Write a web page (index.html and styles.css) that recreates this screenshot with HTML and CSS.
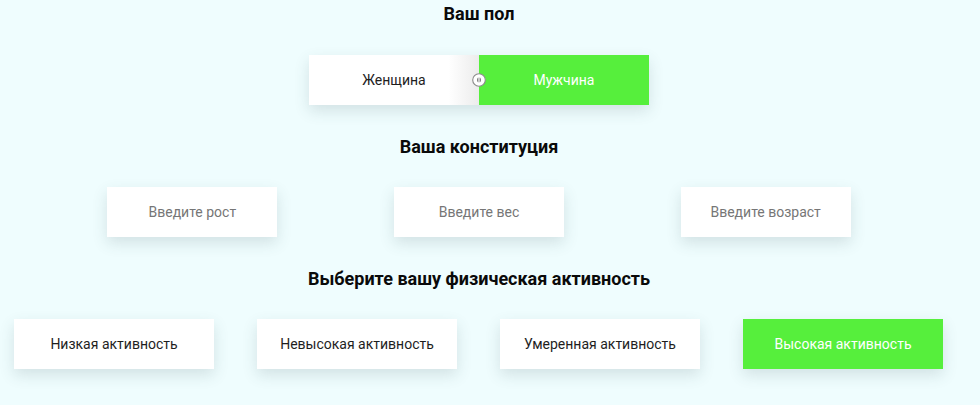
FILE: index.html
```html
<!DOCTYPE html>
<html lang="ru">
<head>
<meta charset="utf-8">
<title>Калькулятор</title>
<link rel="stylesheet" href="styles.css">
</head>
<body>
<main class="form">
  <section class="block block-gender">
    <h2 class="title">Ваш пол</h2>
    <div class="toggle">
      <button class="toggle-option toggle-female" type="button">Женщина</button>
      <button class="toggle-option toggle-male is-active" type="button">Мужчина</button>
      <span class="toggle-handle" aria-hidden="true">
        <svg viewBox="0 0 14 14" width="14" height="14">
          <circle cx="7" cy="7" r="6.3" fill="#fff" stroke="#8a8a8a" stroke-width="1.1"/>
          <path d="M6.3 4.6 C4.9 5.2 4.9 8.8 6.3 9.4 Z" fill="#555"/>
          <path d="M7.7 4.6 C9.1 5.2 9.1 8.8 7.7 9.4 Z" fill="#555"/>
        </svg>
      </span>
    </div>
  </section>

  <section class="block">
    <h2 class="title">Ваша конституция</h2>
    <div class="fields">
      <div class="field-cell"><input class="field" type="text" placeholder="Введите рост"></div>
      <div class="field-cell"><input class="field" type="text" placeholder="Введите вес"></div>
      <div class="field-cell"><input class="field" type="text" placeholder="Введите возраст"></div>
    </div>
  </section>

  <section class="block">
    <h2 class="title">Выберите вашу физическая активность</h2>
    <div class="activities">
      <button class="activity" type="button">Низкая активность</button>
      <button class="activity" type="button">Невысокая активность</button>
      <button class="activity" type="button">Умеренная активность</button>
      <button class="activity is-active" type="button">Высокая активность</button>
    </div>
  </section>
</main>
</body>
</html>
```

FILE: styles.css
```css
* {
  box-sizing: border-box;
}

html, body {
  margin: 0;
  padding: 0;
  background: #effdfe;
}

body {
  font-family: Roboto, "Liberation Sans", Arial, sans-serif;
  color: #1e1e1e;
  width: 980px;
  height: 405px;
  overflow: hidden;
}

.form {
  width: 958px;
  padding-top: 3px;
  display: flex;
  flex-direction: column;
  gap: 31px;
}

.title {
  margin: 0 0 30px;
  font-size: 18px;
  line-height: 21px;
  font-weight: 700;
  text-align: center;
  color: #0a0a0a;
}

.block-gender .title {
  margin-bottom: 31px;
}

/* Gender toggle */
.toggle {
  position: relative;
  display: flex;
  width: 340px;
  height: 50px;
  margin: 0 auto;
  box-shadow: 0 6px 14px rgba(60, 90, 95, 0.16);
}

.toggle-option {
  flex: 1 1 0;
  border: 0;
  margin: 0;
  padding: 0;
  font-family: inherit;
  font-size: 14px;
  color: #1e1e1e;
  cursor: pointer;
}

.toggle-female {
  background: linear-gradient(to right, #ffffff 0%, #ffffff 82%, #ececec 100%);
}

.toggle-male {
  background: #56ef3c;
  color: #ffffff;
}

.toggle-handle {
  position: absolute;
  left: 163px;
  top: 18px;
  width: 14px;
  height: 14px;
  display: block;
}

.toggle-handle svg {
  display: block;
}

/* Constitution fields */
.fields {
  display: grid;
  grid-template-columns: repeat(3, 1fr);
  width: 860px;
  margin: 0 auto;
}

.field-cell {
  display: flex;
  justify-content: center;
}

.field {
  width: 170px;
  height: 50px;
  border: 0;
  outline: none;
  background: #ffffff;
  font-family: inherit;
  font-size: 14px;
  text-align: center;
  color: #1e1e1e;
  box-shadow: 0 6px 14px rgba(60, 90, 95, 0.16);
}

.field::placeholder {
  color: #767676;
  opacity: 1;
}

/* Activity */
.activities {
  display: flex;
  gap: 43px;
  padding-left: 14px;
}

.activity {
  width: 200px;
  height: 50px;
  border: 0;
  margin: 0;
  padding: 0;
  background: #ffffff;
  font-family: inherit;
  font-size: 14px;
  color: #1e1e1e;
  cursor: pointer;
  box-shadow: 0 6px 14px rgba(60, 90, 95, 0.16);
}

.activity.is-active {
  background: #56ef3c;
  color: #ffffff;
}
```
